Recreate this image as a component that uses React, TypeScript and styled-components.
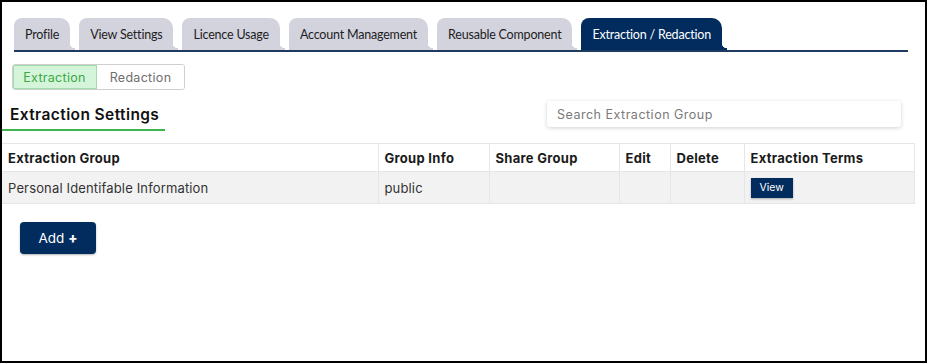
import React from 'react'
import styled, { createGlobalStyle } from 'styled-components'

const GlobalStyle = createGlobalStyle`
	* {
		box-sizing: border-box;
	}
	body {
		margin: 0;
		background: #fff;
		font-family: Inter, 'Open Sans', sans-serif;
	}
`

const navy = '#022c5e'

const Frame = styled.div`
	width: 927px;
	height: 363px;
	border: 2px solid #000;
	padding-top: 16px;
	display: flex;
	flex-direction: column;
`

const TabBar = styled.div`
	display: flex;
	gap: 9px;
	margin: 0 17px 0 12px;
	border-bottom: 2px solid #1f3a5f;
`

const Tab = styled.div<{ $active?: boolean }>`
	position: relative;
	height: 32px;
	padding: 0 11px;
	display: flex;
	align-items: center;
	font-family: Lato, 'Open Sans', sans-serif;
	font-size: 12.5px;
	letter-spacing: -0.2px;
	color: ${(p) => (p.$active ? '#fff' : '#1d1d1d')};
	background: ${(p) => (p.$active ? navy : '#d3d3de')};
	border-radius: 8px 10px 0 0;
	white-space: nowrap;

	&::after {
		content: '';
		position: absolute;
		right: -5px;
		bottom: 0;
		width: 5px;
		height: 7px;
		background: radial-gradient(circle at 100% 0, transparent 5px, ${(p) => (p.$active ? navy : '#d3d3de')} 5.5px);
	}
`

const Segmented = styled.div`
	display: flex;
	margin: 12px 0 0 10px;
	align-self: flex-start;
	height: 26px;
	border: 1px solid #cfcfcf;
	border-radius: 3px;
	overflow: hidden;
`

const Segment = styled.div<{ $active?: boolean }>`
	display: flex;
	align-items: center;
	justify-content: center;
	width: ${(p) => (p.$active ? '84px' : '87px')};
	font-size: 12.5px;
	letter-spacing: 0.3px;
	color: ${(p) => (p.$active ? '#3aa845' : '#6e6e6e')};
	background: ${(p) => (p.$active ? '#d5f5da' : '#fff')};
	border-right: ${(p) => (p.$active ? '1px solid #9fdca8' : 'none')};
	outline: ${(p) => (p.$active ? '1px solid #9fdca8' : 'none')};
	outline-offset: -1px;
`

const HeaderRow = styled.div`
	display: flex;
	justify-content: space-between;
	align-items: flex-start;
	margin: 11px 24px 0 0;
`

const Title = styled.h2`
	margin: 0;
	width: 163px;
	height: 30px;
	padding: 4px 0 0 8px;
	font-size: 15.5px;
	font-weight: 600;
	letter-spacing: 0.4px;
	color: #111;
	border-bottom: 2px solid #3cb54a;
	white-space: nowrap;
`

const Search = styled.input`
	width: 354px;
	height: 26px;
	padding: 0 10px;
	border: none;
	border-radius: 3px;
	box-shadow: 0 1px 4px rgba(0, 0, 0, 0.18);
	font-family: Inter, 'Open Sans', sans-serif;
	font-size: 12.5px;
	letter-spacing: 0.5px;
	outline: none;

	&::placeholder {
		color: #7a7a7a;
	}
`

const Table = styled.table`
	margin-top: 12px;
	width: 912px;
	border-collapse: collapse;
	table-layout: fixed;
`

const Th = styled.th<{ $w: number }>`
	width: ${(p) => p.$w}px;
	height: 28px;
	padding: 0 6px;
	text-align: left;
	font-size: 13px;
	font-weight: 700;
	letter-spacing: 0.3px;
	color: #1a1a1a;
	border: 1px solid #e6e6e6;
	border-left: none;
	white-space: nowrap;

	&:last-child {
		border-right: 1px solid #e6e6e6;
	}
`

const Td = styled.td`
	height: 32px;
	padding: 0 6px;
	font-size: 13px;
	letter-spacing: 0.15px;
	color: #333;
	background: #f2f2f2;
	border-right: 1px solid #e6e6e6;
	border-bottom: 1px solid #e6e6e6;
	white-space: nowrap;
`

const ViewButton = styled.button`
	height: 20px;
	padding: 0 9px;
	border: none;
	background: ${navy};
	color: #fff;
	font-family: Inter, 'Open Sans', sans-serif;
	font-size: 10.5px;
	box-shadow: 0 1px 2px rgba(0, 0, 0, 0.3);
`

const AddButton = styled.button`
	margin: 18px 0 0 18px;
	align-self: flex-start;
	width: 76px;
	height: 32px;
	border: none;
	border-radius: 4px;
	background: ${navy};
	color: #fff;
	font-family: Inter, 'Open Sans', sans-serif;
	font-size: 13.5px;
	box-shadow: 0 1px 2px rgba(0, 0, 0, 0.3);

	b {
		font-weight: 800;
	}
`

const tabs = ['Profile', 'View Settings', 'Licence Usage', 'Account Management', 'Reusable Component', 'Extraction / Redaction']

const columns: [string, number][] = [
	['Extraction Group', 376],
	['Group Info', 111],
	['Share Group', 130],
	['Edit', 51],
	['Delete', 74],
	['Extraction Terms', 170],
]

const App = () => {
	return (
		<>
			<GlobalStyle />
			<Frame>
				<TabBar>
					{tabs.map((t) => (
						<Tab key={t} $active={t === 'Extraction / Redaction'}>
							{t}
						</Tab>
					))}
				</TabBar>
				<Segmented>
					<Segment $active>Extraction</Segment>
					<Segment>Redaction</Segment>
				</Segmented>
				<HeaderRow>
					<Title>Extraction Settings</Title>
					<Search placeholder="Search Extraction Group" />
				</HeaderRow>
				<Table>
					<thead>
						<tr>
							{columns.map(([name, w]) => (
								<Th key={name} $w={w}>
									{name}
								</Th>
							))}
						</tr>
					</thead>
					<tbody>
						<tr>
							<Td>Personal Identifable Information</Td>
							<Td>public</Td>
							<Td />
							<Td />
							<Td />
							<Td>
								<ViewButton>View</ViewButton>
							</Td>
						</tr>
					</tbody>
				</Table>
				<AddButton>
					Add <b>+</b>
				</AddButton>
			</Frame>
		</>
	)
}

export default App
